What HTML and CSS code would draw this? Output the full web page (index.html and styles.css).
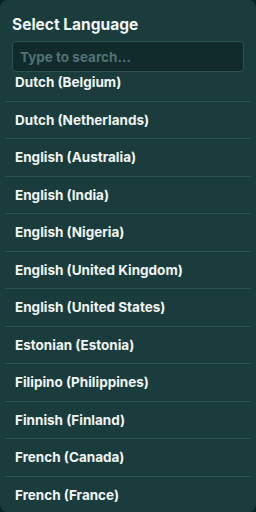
FILE: index.html
```html
<!DOCTYPE html>
<html>
<head>
  <meta charset="UTF-8">
  <title>Select Language</title>
  <link rel="stylesheet" href="styles.css">
</head>
<body>
  <div class="panel">
    <h1 class="title">Select Language</h1>
    <input class="search" type="text" placeholder="Type to search...">
    <div class="list-wrap">
      <ul class="lang-list">
        <li>Dutch (Belgium)</li>
        <li>Dutch (Netherlands)</li>
        <li>English (Australia)</li>
        <li>English (India)</li>
        <li>English (Nigeria)</li>
        <li>English (United Kingdom)</li>
        <li>English (United States)</li>
        <li>Estonian (Estonia)</li>
        <li>Filipino (Philippines)</li>
        <li>Finnish (Finland)</li>
        <li>French (Canada)</li>
        <li>French (France)</li>
      </ul>
    </div>
  </div>
</body>
</html>
```

FILE: styles.css
```css
html, body {
  margin: 0;
  height: 100%;
  background-color: #0e2222;
}
body {
  font-family: "Inter", "Liberation Sans", sans-serif;
  color: #f0f5f4;
}
.panel {
  box-sizing: border-box;
  height: 512px;
  background-color: #1a3c3c;
  border-radius: 8px;
  padding: 15px 0 0;
  display: flex;
  flex-direction: column;
  overflow: hidden;
}
.title {
  font-size: 15.5px;
  font-weight: 700;
  margin: 0 12px 6px;
  line-height: 20px;
}
.search {
  box-sizing: border-box;
  flex: none;
  margin: 0 12px;
  height: 31px;
  padding: 0 7px;
  background-color: #112a2a;
  border: 1px solid #2b5050;
  border-radius: 4px;
  color: #f0f5f4;
  font-family: inherit;
  font-size: 13.5px;
  font-weight: 700;
  outline: none;
}
.search::placeholder {
  color: #4f7373;
}
.list-wrap {
  flex: 1;
  overflow: hidden;
  margin: 0 5px;
}
.lang-list {
  list-style: none;
  margin: -8px 0 0;
  padding: 0;
}
.lang-list li {
  box-sizing: border-box;
  height: 37.5px;
  display: flex;
  align-items: center;
  padding: 0 10px;
  border-bottom: 1px solid #2a5454;
  font-size: 13.5px;
  font-weight: 700;
}
```
